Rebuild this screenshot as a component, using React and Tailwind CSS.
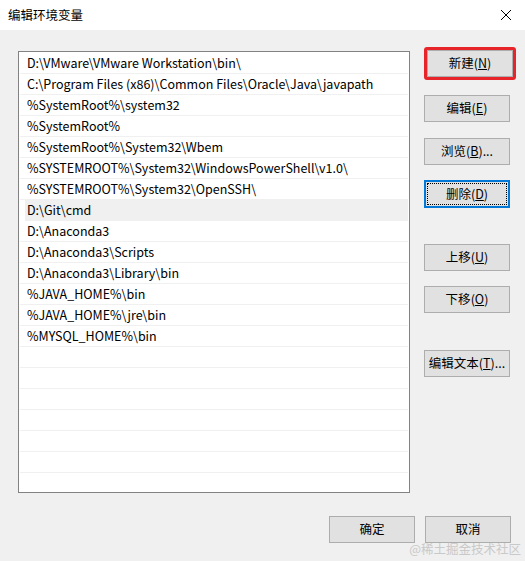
import React from "react";

const rows = [
  "D:\\VMware\\VMware Workstation\\bin\\",
  "C:\\Program Files (x86)\\Common Files\\Oracle\\Java\\javapath",
  "%SystemRoot%\\system32",
  "%SystemRoot%",
  "%SystemRoot%\\System32\\Wbem",
  "%SYSTEMROOT%\\System32\\WindowsPowerShell\\v1.0\\",
  "%SYSTEMROOT%\\System32\\OpenSSH\\",
  "D:\\Git\\cmd",
  "D:\\Anaconda3",
  "D:\\Anaconda3\\Scripts",
  "D:\\Anaconda3\\Library\\bin",
  "%JAVA_HOME%\\bin",
  "%JAVA_HOME%\\jre\\bin",
  "%MYSQL_HOME%\\bin",
  "", "", "", "", "", "", "",
];

function Btn({ label, k, suffix = "", mt = "", variant = "" }) {
  const base =
    "w-[86px] h-[27px] flex items-center justify-center text-[12.5px] text-[#000] bg-[#e1e1e1] border border-[#adadad]";
  if (variant === "red") {
    return (
      <div className={"rounded-[3px] border-[3px] border-[#e8242b] p-0 " + mt}>
        <div className={base + " w-[83px] h-[26px]"}>
          {label}(<span className="underline">{k}</span>){suffix}
        </div>
      </div>
    );
  }
  if (variant === "focus") {
    return (
      <div className={"w-[86px] h-[28px] border-2 border-[#0078d7] bg-[#e1e1e1] p-[1px] " + mt}>
        <div className="w-full h-full flex items-center justify-center text-[12.5px] border border-dotted border-[#000]">
          {label}(<span className="underline">{k}</span>){suffix}
        </div>
      </div>
    );
  }
  return (
    <div className={base + " " + mt}>
      {label}
      {k ? (
        <>
          (<span className="underline">{k}</span>)
        </>
      ) : null}
      {suffix}
    </div>
  );
}

export default function App() {
  return (
    <div
      className="w-[525px] h-[561px] bg-[#f0f0f0] flex flex-col relative overflow-hidden"
      style={{ fontFamily: '"Microsoft YaHei", "Noto Sans CJK SC", sans-serif' }}
    >
      <div className="h-[30px] bg-white flex items-center justify-between pl-[8px] pr-[10px] shrink-0">
        <span className="text-[12.5px] text-[#000]">编辑环境变量</span>
        <svg width="12" height="12" viewBox="0 0 12 12" className="mr-[3px]">
          <path d="M1 1L11 11M11 1L1 11" stroke="#000" strokeWidth="1" />
        </svg>
      </div>
      <div className="flex pl-[18px] pt-[21px]">
        <div className="w-[392px] h-[442px] bg-white border border-[#828282] pt-[1px] px-[1px] overflow-hidden">
          {rows.map((r, i) => (
            <div
              key={i}
              className={
                "h-[21px] flex items-center text-[12.5px] text-[#000] border-b border-[#f0f0f0] whitespace-nowrap " +
                (i === 7 ? "bg-[#f0f0f0] ml-[5px] pl-[2px]" : "pl-[7px]")
              }
            >
              {r}
            </div>
          ))}
        </div>
        <div className="flex flex-col ml-[14px] -mt-[4px]">
          <Btn label="新建" k="N" variant="red" />
          <Btn label="编辑" k="E" mt="mt-[15px]" />
          <Btn label="浏览" k="B" suffix="..." mt="mt-[16px]" />
          <Btn label="删除" k="D" variant="focus" mt="mt-[15px]" />
          <Btn label="上移" k="U" mt="mt-[36px]" />
          <Btn label="下移" k="O" mt="mt-[15px]" />
          <Btn label="编辑文本" k="T" suffix="..." mt="mt-[37px]" />
        </div>
      </div>
      <div className="flex justify-end gap-[10px] pr-[14px] mt-[23px]">
        <Btn label="确定" />
        <Btn label="取消" />
      </div>
      <div className="absolute right-[4px] bottom-[2px] text-[12.5px] text-[#c9c9c9]">
        @稀土掘金技术社区
      </div>
    </div>
  );
}
